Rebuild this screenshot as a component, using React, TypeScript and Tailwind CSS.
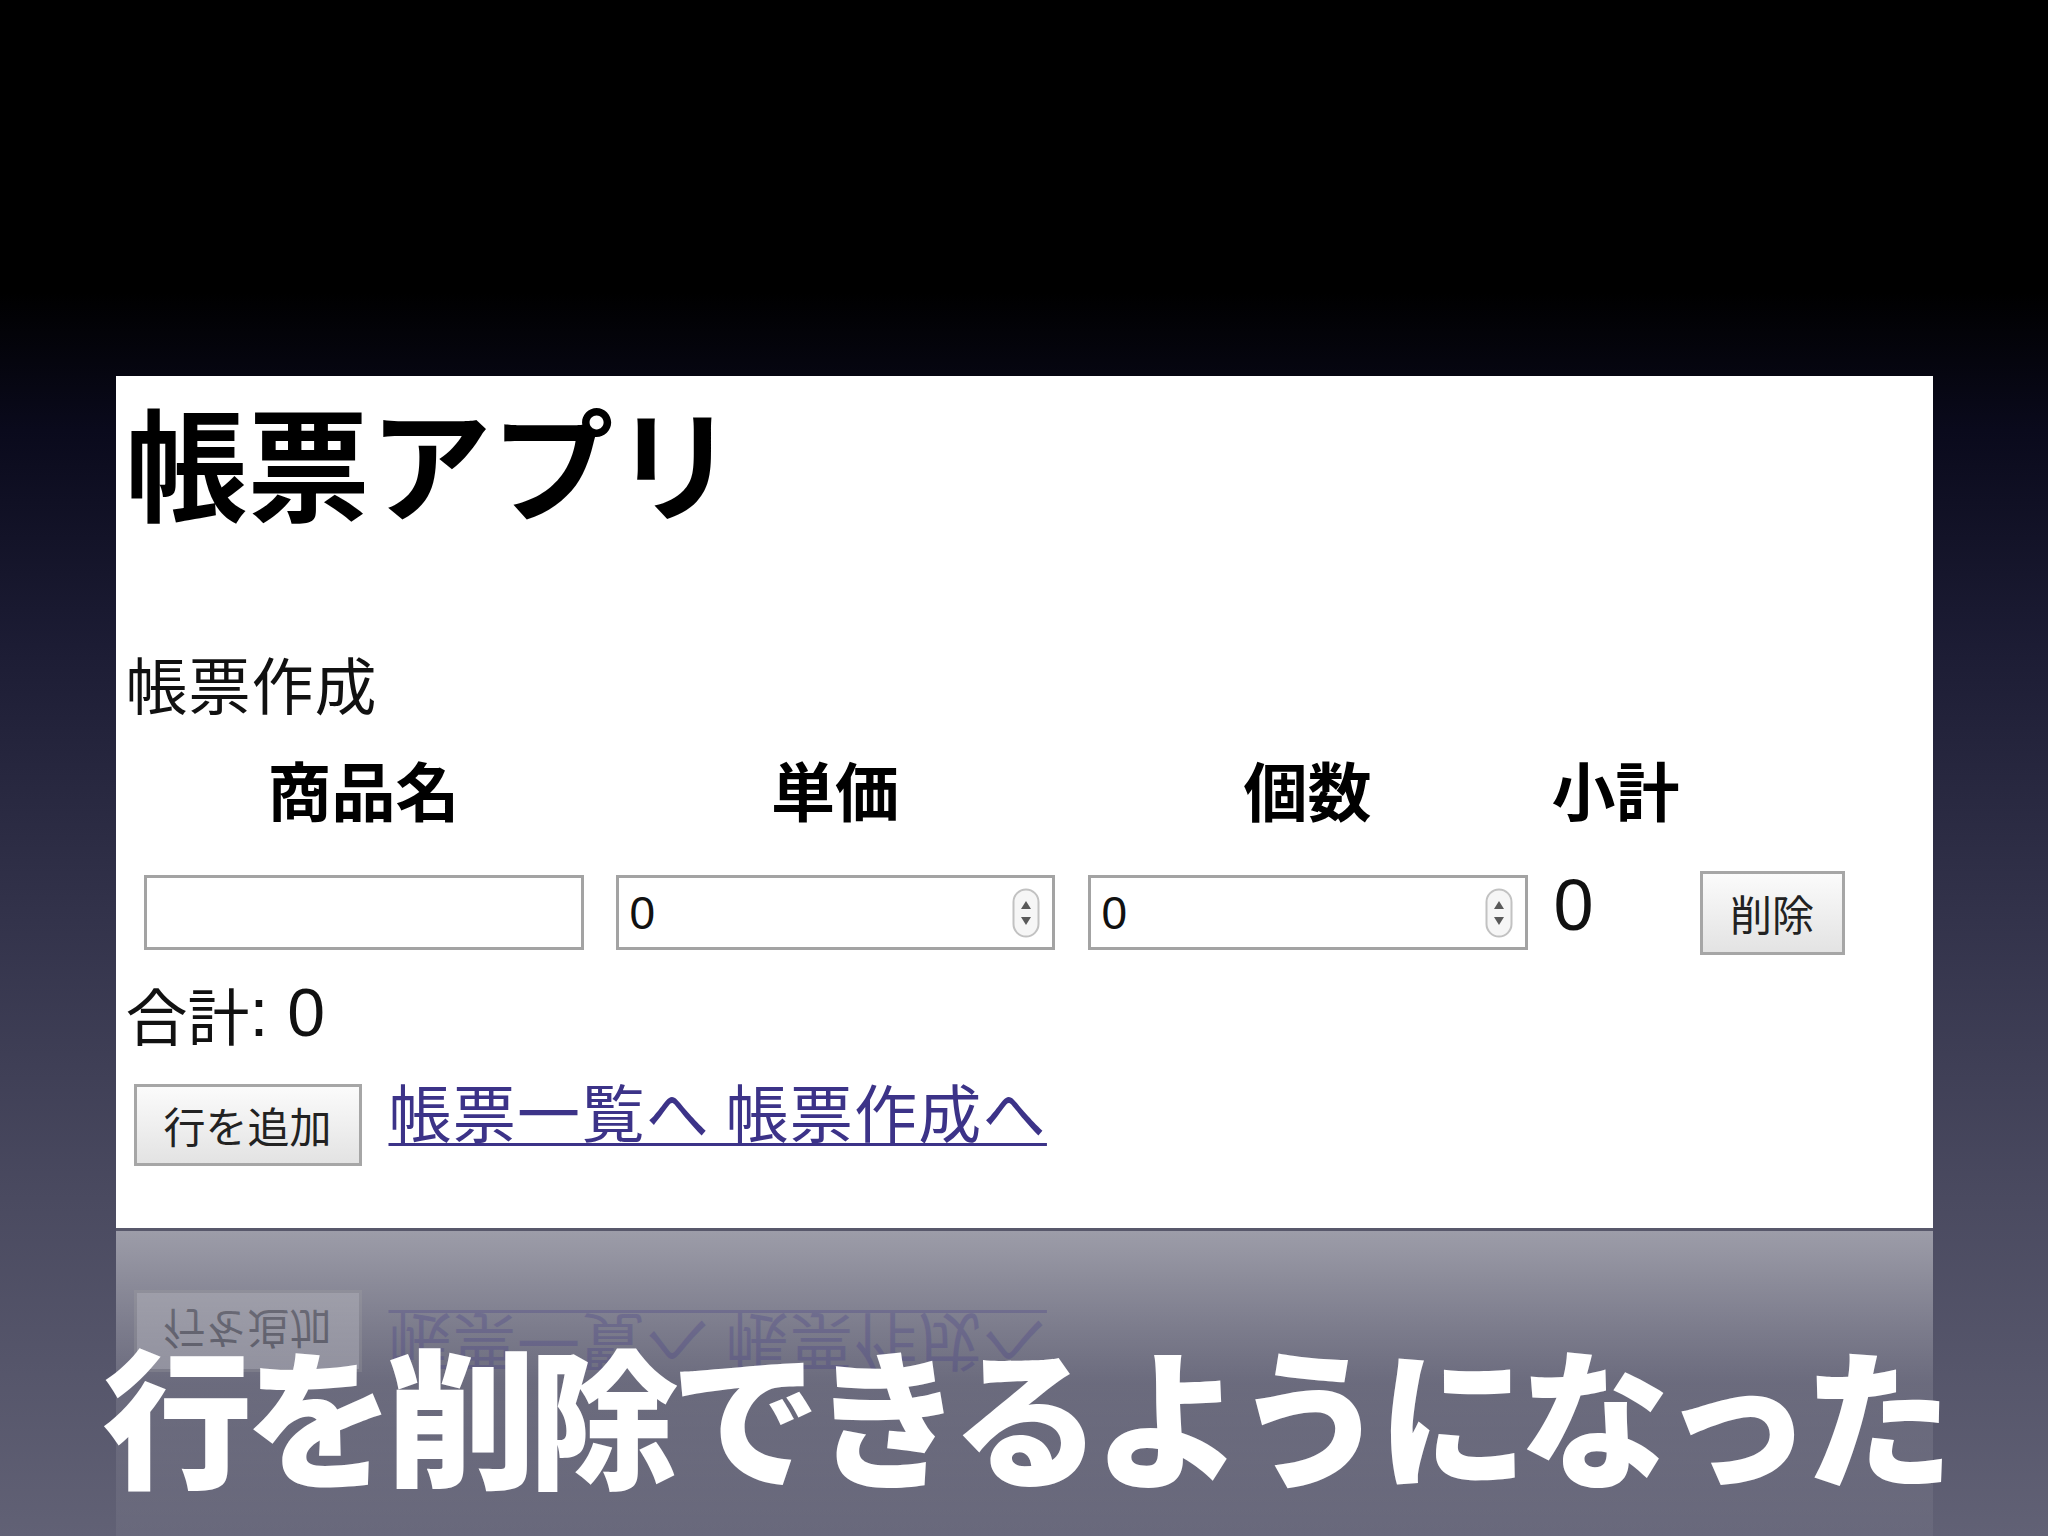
const jp = "font-['Noto_Sans_CJK_JP',sans-serif]";

const Spinner = () => (
  <svg width="28" height="50" viewBox="0 0 28 50" className="shrink-0">
    <rect x="1.5" y="1.5" width="25" height="47" rx="12.5" fill="#f6f6f6" stroke="#c2c2c2" strokeWidth="2" />
    <path d="M14 13 L19 21 L9 21 Z" fill="#5a5a5a" />
    <path d="M14 37 L19 29 L9 29 Z" fill="#5a5a5a" />
  </svg>
);

const NumberInput = ({ className }: { className: string }) => (
  <div
    className={`${className} h-[75px] border-[3px] border-[#a3a3a3] bg-white flex items-center justify-between pl-[11px] pr-[12px]`}
  >
    <span className="font-['Liberation_Sans',sans-serif] text-[46px] leading-none text-[#111]">0</span>
    <Spinner />
  </div>
);

const BottomRow = () => (
  <div className="flex items-start">
    <div className="ml-[18px] w-[228px] h-[82px] border-[3px] border-[#a6a6a6] bg-gradient-to-b from-[#fbfbfb] to-[#e3e3e3] flex items-center justify-center text-[42px] leading-none text-[#222]">
      行を追加
    </div>
    <div className="ml-[27px] -mt-[9px] text-[63px] leading-[70px] tracking-[1.3px] text-[#3c3388] underline decoration-[3px] underline-offset-[6px]">
      帳票一覧へ 帳票作成へ
    </div>
  </div>
);

export default function App() {
  return (
    <div
      className={`${jp} w-[2048px] h-[1536px] overflow-hidden flex flex-col items-center pt-[376px] bg-[linear-gradient(to_bottom,#000_0%,#000_19%,#0a0a1c_28%,#1c1c34_42%,#33334b_60%,#4a4a60_78%,#616175_100%)]`}
    >
      {/* screenshot panel */}
      <div className="relative w-[1817px] h-[852px] bg-white shrink-0">
        <div className="pl-[10px] pt-[23px] text-black">
          <h1 className="h-[120px] text-[122px] leading-[120px] font-bold">帳票アプリ</h1>
          <div className="mt-[129px] h-[70px] text-[62px] leading-[70px] tracking-[1px] text-[#111]">帳票作成</div>
        </div>

        {/* table header */}
        <div className="flex mt-[35px] h-[70px] text-[64px] leading-[70px] font-bold text-black whitespace-nowrap">
          <div className="ml-[28px] w-[440px] flex justify-center">商品名</div>
          <div className="ml-[32px] w-[439px] flex justify-center">単価</div>
          <div className="ml-[33px] w-[440px] flex justify-center">個数</div>
          <div className="ml-[26px] w-[124px] flex justify-center">小計</div>
        </div>

        {/* table row */}
        <div className="flex items-center mt-[52px] h-[75px]">
          <div className="ml-[28px] w-[440px] h-[75px] border-[3px] border-[#a3a3a3] bg-white" />
          <NumberInput className="ml-[32px] w-[439px]" />
          <NumberInput className="ml-[33px] w-[440px]" />
          <div className="ml-[26px] w-[124px] self-start -mt-[6px] font-['Liberation_Sans',sans-serif] text-[72px] leading-none text-[#111]">
            0
          </div>
          <div className="ml-[22px] w-[145px] h-[84px] border-[3px] border-[#a6a6a6] bg-gradient-to-b from-[#fbfbfb] to-[#e3e3e3] flex items-center justify-center text-[42px] leading-none text-[#222]">
            削除
          </div>
        </div>

        <div className="pl-[10px] mt-[29px] h-[70px] flex items-center text-[62px] leading-[70px] text-[#111] whitespace-pre">
          <span>合計</span>
          <span className="font-['Liberation_Sans',sans-serif] text-[68px] leading-none -mt-[4px]">: 0</span>
        </div>

        <div className="mt-[35px]">
          <BottomRow />
        </div>

        {/* reflection */}
        <div className="absolute left-0 top-full w-full h-[308px] overflow-hidden border-t-[3px] border-[#58586b] bg-gradient-to-b from-white/45 via-white/12 to-white/5">
          <div className="h-[141px] -scale-y-100 opacity-25">
            <BottomRow />
          </div>
        </div>
      </div>

      <div className="relative mt-[109px] h-[150px] text-[150px] leading-[150px] font-black text-white tracking-[-8px] whitespace-nowrap">
        行を削除できるようになった
      </div>
    </div>
  );
}
